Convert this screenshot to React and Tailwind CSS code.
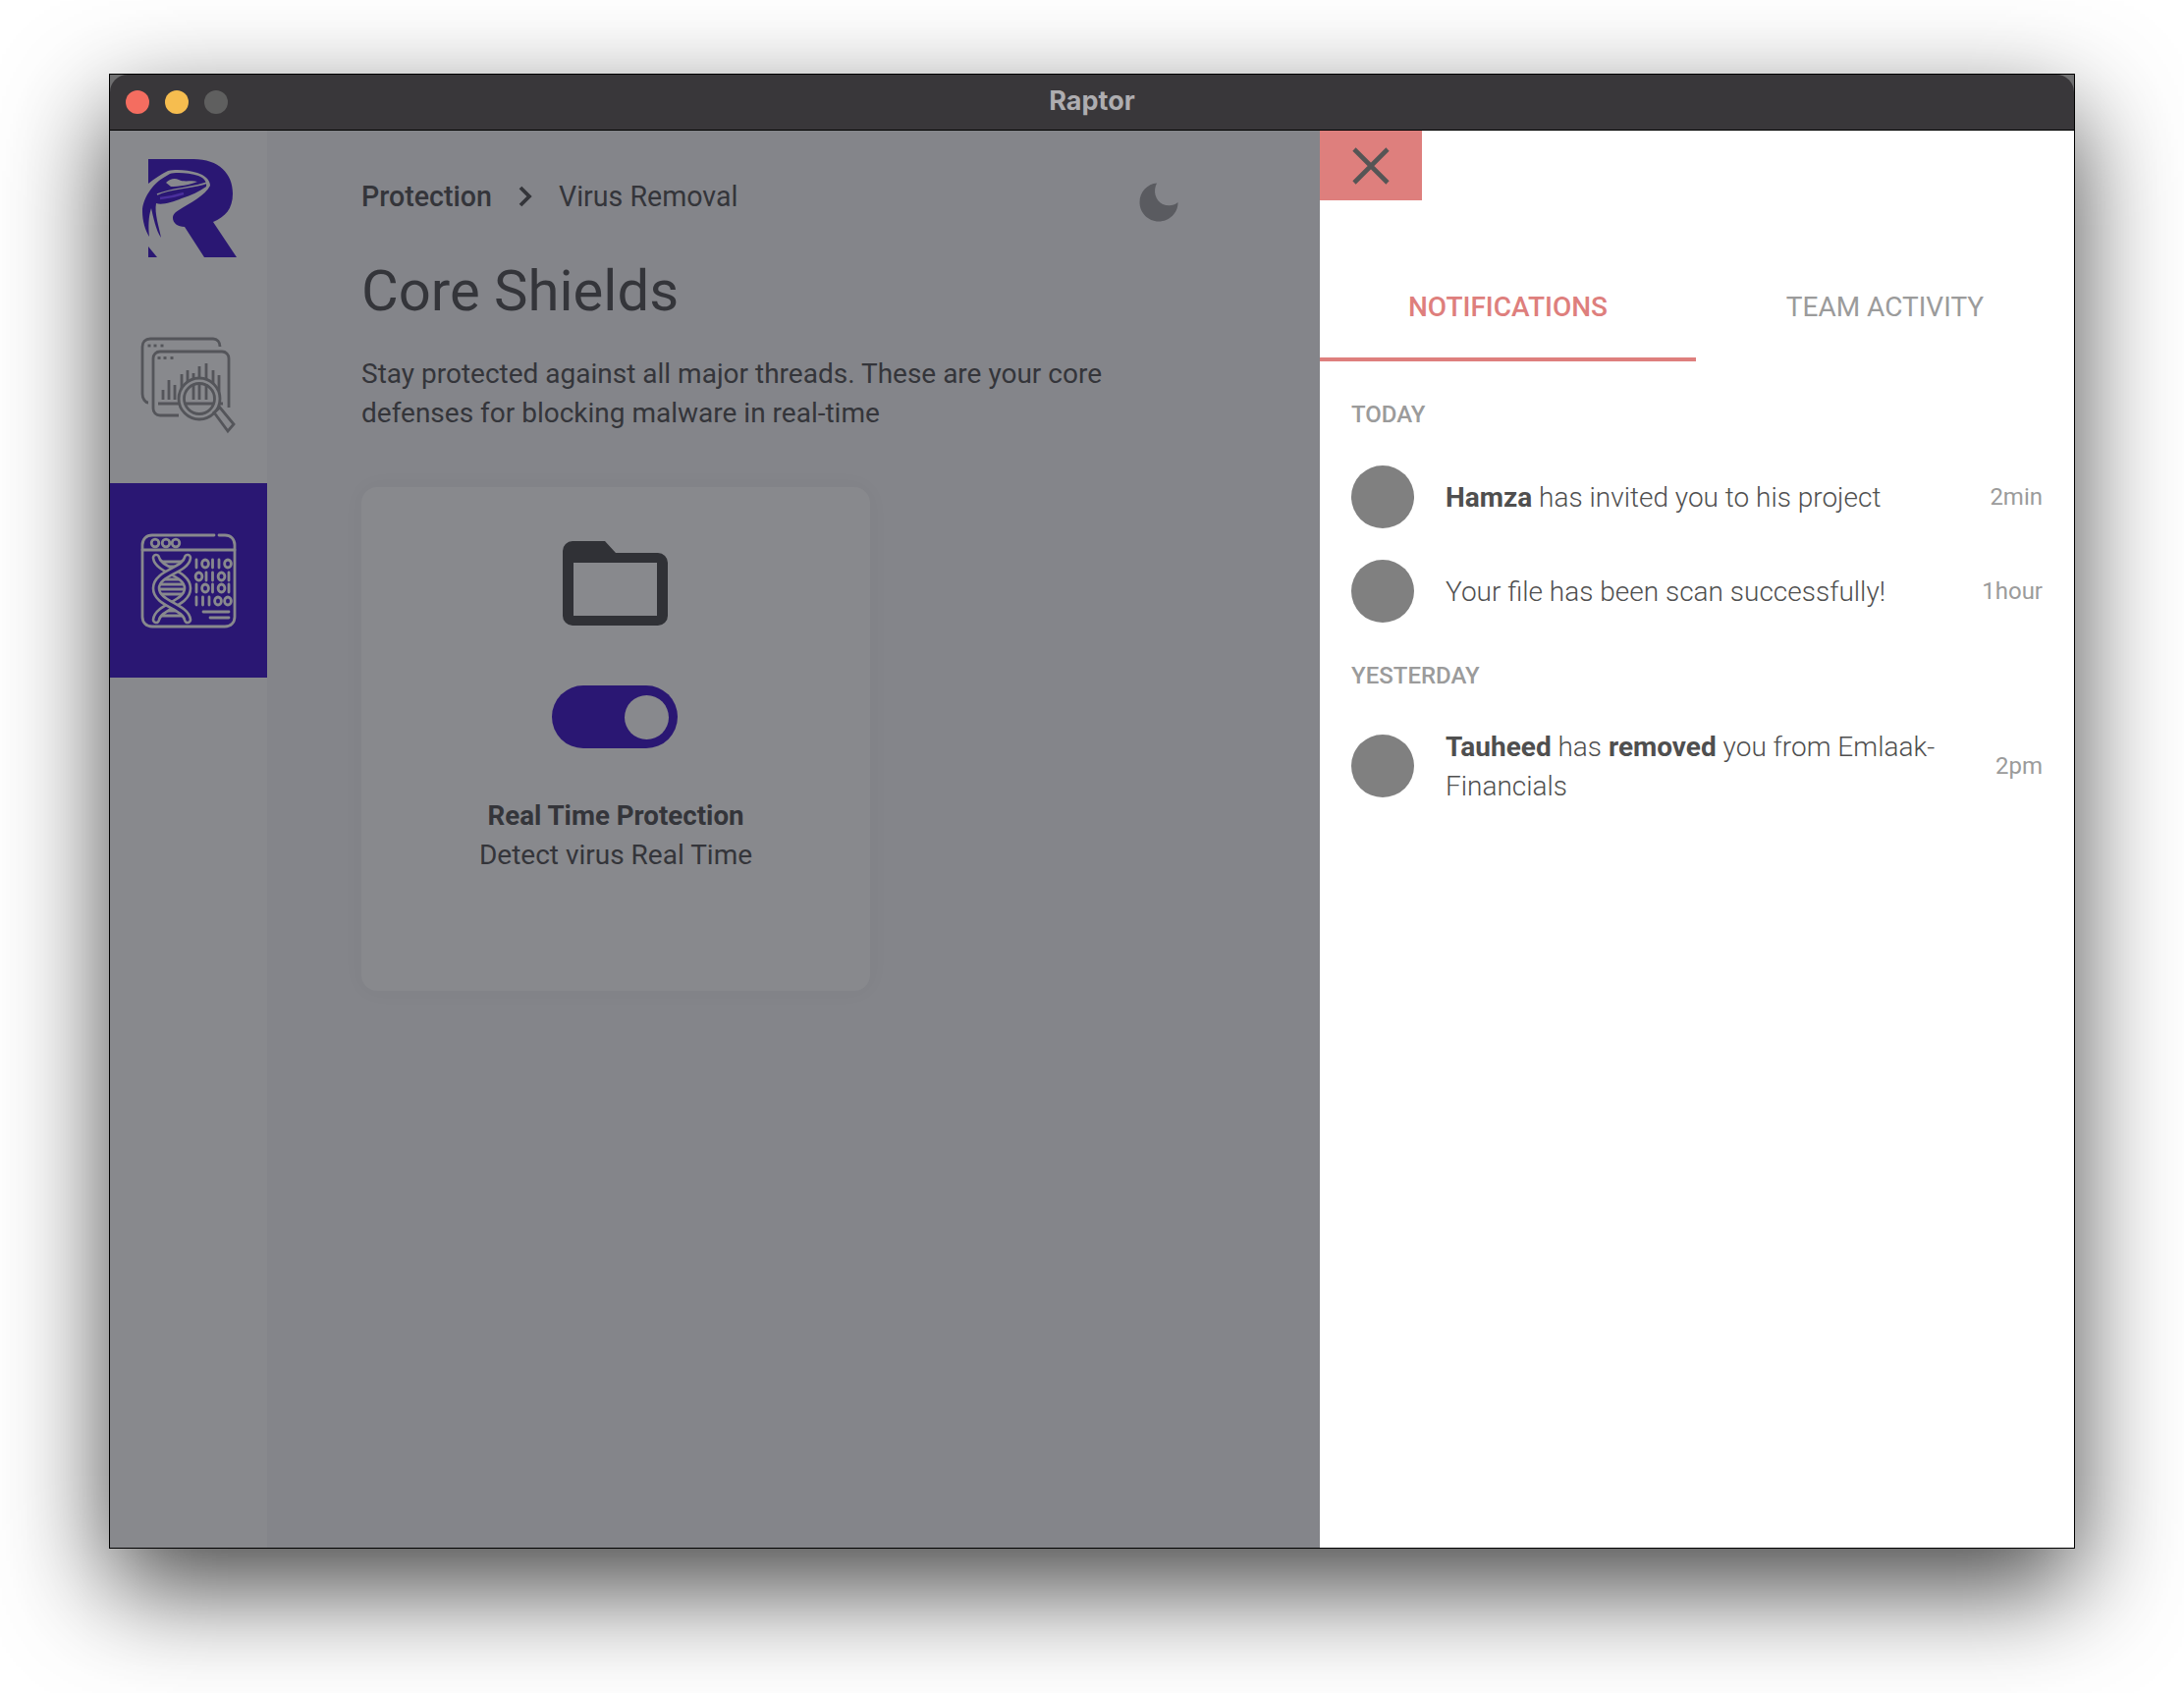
const BINARY_ROWS = [
  { y: 39, bits: '10110' },
  { y: 52, bits: '01101' },
  { y: 64, bits: '10101' },
  { y: 77, bits: '11100' },
];

function RaptorLogo() {
  return (
    <svg viewBox="0 0 115 115" className="w-[115px] h-[115px] ml-px">
      <path fill="#2a1773" d="M16 7H62C88 7 102 22 102 42C102 58 94 66 82 71L106 107H73L53 76C46 76 41 72 41 67C41 63 44 61 47 59C58 52 74 44 79 34C79 28 73 23 66 21C56 18 44 17 36 19C30 22 22 27 16 32Z" />
      <path fill="#2a1773" d="M16 96L25 107H16Z" />
      <path fill="#2a1773" d="M33 25C20 32 10 48 10 60C10 70 13 80 17 86C16 76 16 66 19 57C21 66 24 80 29 87C27 76 22 62 24 52C30 54 40 51 50 47C60 44 68 40 75 35C76 31 73 26 67 24C58 21 44 20 38 22Z" />
      <path fill="#88898d" d="M34 31C38 27 43 26 47 28C53 31 60 28 66 30C60 33 46 35 39 35Z" />
      <path fill="none" stroke="#88898d" strokeWidth="1.4" d="M25 43C40 36 60 37 76 31" />
      <path fill="none" stroke="#4a2f9c" strokeWidth="2.5" d="M28 47C38 46 46 44 52 42" />
    </svg>
  );
}

function AnalyticsIcon() {
  const bars = [
    [31, 62], [37, 52], [43, 57], [50, 46], [56, 42], [62, 45], [68, 38], [75, 35], [82, 42], [88, 47],
  ];
  return (
    <svg viewBox="0 0 115 115" className="w-[115px] h-[115px] ml-px" fill="none" stroke="#54555a" strokeWidth="2.8">
      <path d="M89 18C89 13 86 10 82 10H18C13 10 10 13 10 18V66C10 71 13 75 16 75" />
      <path d="M47 88H28C24 88 21 85 21 81V30C21 26 24 23 28 23H91C95 23 98 26 98 30V80" />
      {[17, 23, 30].map((x) => <path key={x} d={`M${x - 1.5} 17H${x + 1.5}`} />)}
      {[27, 33, 40].map((x) => <path key={x} d={`M${x - 1.5} 29.5H${x + 1.5}`} />)}
      {bars.map(([x, y]) => <path key={x} d={`M${x} ${y}V72`} />)}
      <path d="M26 76H47M57 76H81M89 76H92" />
      <circle cx="68" cy="71" r="21" fill="#88898d" />
      <circle cx="68" cy="71" r="15.5" />
      <path d="M62 56V72M68 56V72M75 56V72M54 76H82" />
      <path d="M83 85L89 80L103 97L97 104Z" />
    </svg>
  );
}

function BinaryRow({ y, bits }) {
  let x = 65;
  return bits.split('').map((bit, i) => {
    const key = y + '-' + i;
    if (bit === '1') {
      const mark = <path key={key} d={`M${x} ${y - 4}V${y + 4}`} />;
      x += 6.5;
      return mark;
    }
    const mark = <ellipse key={key} cx={x + 2.5} cy={y} rx="3.4" ry="4" />;
    x += 10;
    return mark;
  });
}

function DnaIcon() {
  const strandA = 'M24 33C26 46 56 48 56 64C56 80 26 82 24 96';
  const strandB = 'M56 33C54 46 24 48 24 64C24 80 54 82 56 96';
  return (
    <svg viewBox="0 0 115 115" className="w-[115px] h-[115px] ml-px" fill="none" stroke="#88898d" strokeWidth="2.8" strokeLinecap="round">
      <path d="M83 10H20C14 10 10 14 10 20V93C10 99 14 103 20 103H94C100 103 104 99 104 93V20C104 14 100 10 94 10H88" />
      <path d="M10 25H104" />
      <circle cx="23" cy="18" r="3.8" />
      <circle cx="34" cy="18" r="3.8" />
      <circle cx="44" cy="18" r="3.8" />
      <path d="M28 37H52M32 42H48M30 55H50M28 60H52M28 65H52M30 70H50M32 87H48M28 92H52" />
      <path d={strandA} strokeWidth="8.6" />
      <path d={strandA} stroke="#2a1773" strokeWidth="3.4" />
      <path d={strandB} strokeWidth="8.6" />
      <path d={strandB} stroke="#2a1773" strokeWidth="3.4" />
      {BINARY_ROWS.map((row) => <BinaryRow key={row.y} y={row.y} bits={row.bits} />)}
      <path d="M72 88H98M79 94H98" />
    </svg>
  );
}

function Notification({ time, children }) {
  return (
    <div className="flex items-center">
      <div className="w-16 h-16 rounded-full bg-[#808080] shrink-0" />
      <p className="flex-1 ml-8 pt-[2px] text-[28px] leading-10 font-light text-[#4f4f4f]">{children}</p>
      <span className="ml-8 text-2xl text-[#9b9b9b]">{time}</span>
    </div>
  );
}

export default function App() {
  return (
    <div className="w-[2224px] h-[1724px] bg-white pl-[111px] pt-[75px] overflow-hidden font-[Roboto,sans-serif]">
      <div className="w-[2002px] h-[1502px] flex flex-col border border-black bg-[#6f6f70] shadow-[0_40px_100px_rgba(0,0,0,0.72)]">
        {/* Barre de titre */}
        <div className="relative h-[56px] shrink-0 flex items-center pl-[16px] gap-4 rounded-t-[18px] bg-[#39373a]">
          <span className="w-6 h-6 rounded-full bg-[#f46d60]" />
          <span className="w-6 h-6 rounded-full bg-[#f6bd4f]" />
          <span className="w-6 h-6 rounded-full bg-[#5f5f5f]" />
          <span className="absolute inset-x-0 pb-[2px] text-center font-[Inter,sans-serif] font-bold text-[27px] text-[#aeadb0]">Raptor</span>
        </div>

        <div className="flex-1 flex border-t border-black min-h-0">
          {/* Sidebar */}
          <div className="w-[160px] shrink-0 bg-[#88898d] flex flex-col items-center pt-[22px]">
            <RaptorLogo />
            <div className="mt-[65px]">
              <AnalyticsIcon />
            </div>
            <div className="mt-[42px] w-full h-[198px] flex justify-center pt-[43px] bg-[#2a1773]">
              <DnaIcon />
            </div>
          </div>

          {/* Contenu principal */}
          <div className="w-[1072px] shrink-0 bg-[#84858a] pl-[96px] pt-[47px] text-[#34353a]">
            <div className="w-[832px] flex justify-between items-start">
              <div className="flex items-center text-[28.6px] leading-10">
                <span className="font-medium">Protection</span>
                <svg viewBox="0 0 16 24" className="w-4 h-6 mx-[26px]" fill="none" stroke="#34353a" strokeWidth="3.8">
                  <path d="M3 3L12 12L3 21" />
                </svg>
                <span>Virus Removal</span>
              </div>
              <svg viewBox="0 0 40 40" className="w-10 h-10 mt-[6px]">
                <path fill="#5a5b60" d="M18 .6C14 8 16 18 24 22C29 24 35 24 39.5 20C39.7 31 30.5 39.5 20 39.5C9 39.5 .5 30.5 .5 20C.5 9.5 8.5 1.2 18 .6Z" />
              </svg>
            </div>

            <h1 className="mt-[38px] text-[58px] leading-[64px]">Core Shields</h1>
            <p className="mt-[33px] w-[800px] text-[28px] leading-10">
              Stay protected against all major threads. These are your core defenses for blocking malware in real-time
            </p>

            <div className="mt-[55px] w-[518px] h-[513px] flex flex-col items-center pt-[55px] rounded-2xl bg-[#88898d] shadow-[0_0_24px_rgba(0,0,0,0.03)]">
              <svg viewBox="0 0 107 86" className="w-[107px] h-[86px] mr-[2px]">
                <path fill="#303136" fillRule="evenodd" d="M10 0H43L54 12H97A10 10 0 0 1 107 22V76A10 10 0 0 1 97 86H10A10 10 0 0 1 0 76V10A10 10 0 0 1 10 0ZM11 22V76H96V22Z" />
              </svg>
              <div className="mt-[61px] mr-[2px] w-[128px] h-[64px] flex items-center justify-end pr-[9px] rounded-full bg-[#2a1773]">
                <div className="w-[45px] h-[45px] rounded-full bg-[#88898d]" />
              </div>
              <div className="mt-[49px] font-bold text-[27.7px] leading-10">Real Time Protection</div>
              <div className="text-[28px] leading-10">Detect virus Real Time</div>
            </div>
          </div>

          {/* Panneau notifications */}
          <div className="flex-1 bg-white">
            <div className="w-[104px] h-[71px] flex items-center justify-center bg-[#de7f7d]">
              <svg viewBox="0 0 40 40" className="w-10 h-10" fill="none" stroke="#555555" strokeWidth="4.6">
                <path d="M3 3L37 37M37 3L3 37" />
              </svg>
            </div>

            <div className="flex">
              <div className="w-[383px] pt-[89px] pb-[31px] border-b-4 border-[#de7f7d] text-center text-[28px] leading-10 font-medium text-[#de7f7d]">NOTIFICATIONS</div>
              <div className="flex-1 pt-[89px] pb-[35px] text-center text-[28px] leading-10 text-[#9b9b9b]">TEAM ACTIVITY</div>
            </div>

            <div className="px-8">
              <div className="mt-[38px] text-2xl leading-8 font-medium text-[#9b9b9b]">TODAY</div>
              <div className="mt-9 flex flex-col gap-8">
                <Notification time="2min">
                  <b className="font-bold">Hamza</b> has invited you to his project
                </Notification>
                <Notification time="1hour">Your file has been scan successfully!</Notification>
              </div>

              <div className="mt-[38px] text-2xl leading-8 font-medium text-[#9b9b9b]">YESTERDAY</div>
              <div className="mt-[35px]">
                <Notification time="2pm">
                  <b className="font-bold">Tauheed</b> has <b className="font-bold">removed</b> you from Emlaak-Financials
                </Notification>
              </div>
            </div>
          </div>
        </div>
      </div>
    </div>
  );
}
